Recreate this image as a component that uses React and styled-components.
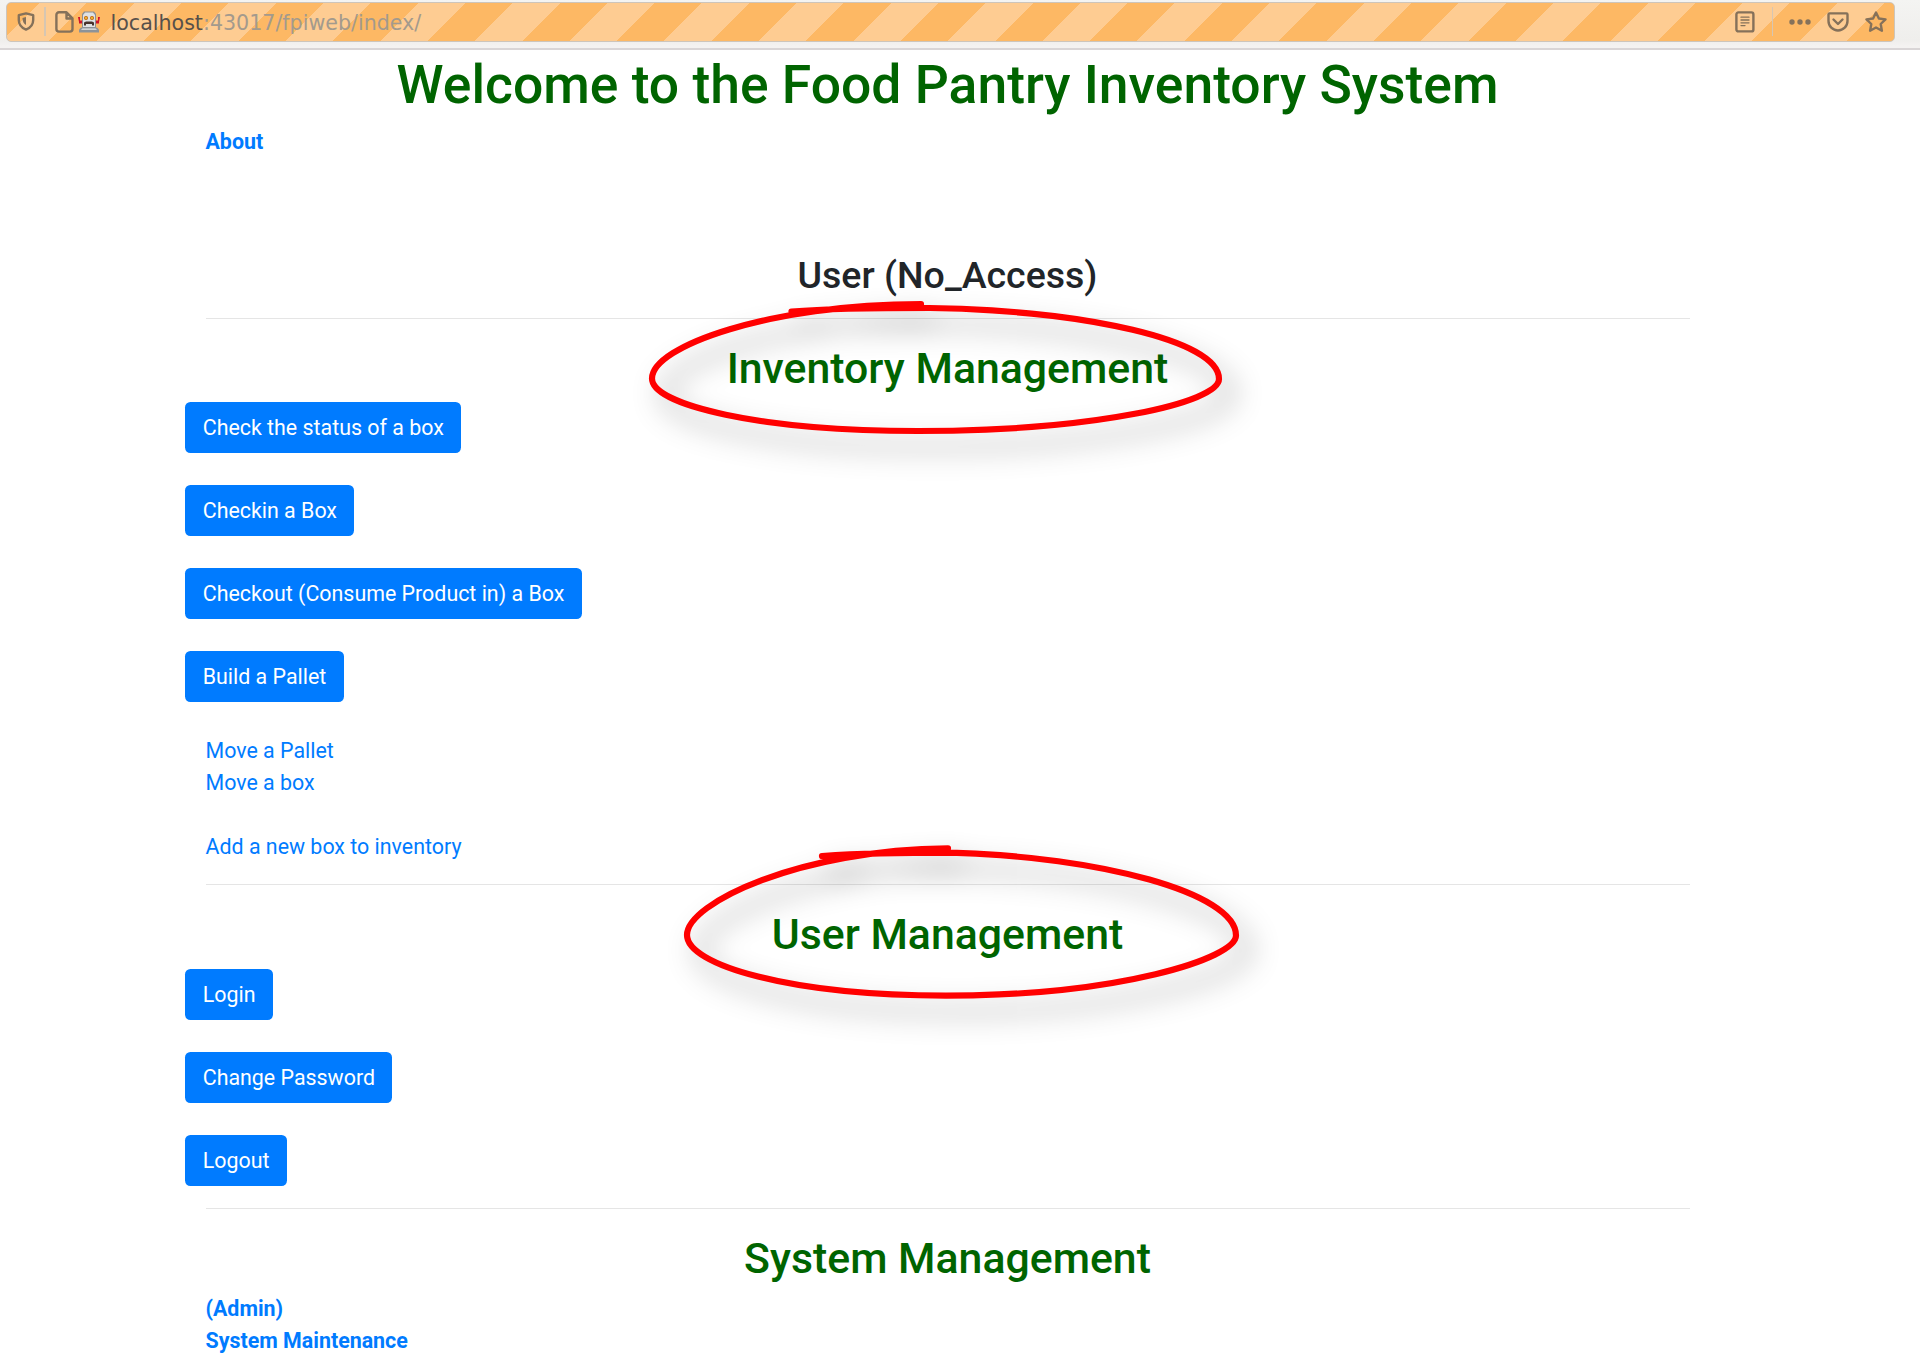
import React from 'react';
import styled, { createGlobalStyle } from 'styled-components';

const Global = createGlobalStyle`
  * { box-sizing: border-box; }
  html, body { margin: 0; background: #fff; }
  body { font-family: Roboto, sans-serif; font-size: 21.4px; line-height: 32.1px; color: #212529; overflow: hidden; }
`;

const Page = styled.div`
  position: relative;
  width: 1920px;
  height: 1359px;
  overflow: hidden;
  background: #fff;
`;

const Toolbar = styled.header`
  height: 50px;
  padding: 2px 25px 0 6px;
  background: linear-gradient(#f4f4f2, #efeeec 40px, #f4f2f1 46px);
  border-bottom: 2px solid #d9d5d6;
`;

const AddressBar = styled.div`
  height: 39.5px;
  display: flex;
  align-items: center;
  border: 1.5px solid #cdc5bb;
  border-radius: 5px;
  background: repeating-linear-gradient(135deg,
    #fdb864 0, #fdb864 23.1px, #fecc92 23.1px, #fecc92 56.55px, #fdb864 56.55px, #fdb864 66.9px);
`;

const Separator = styled.span`
  width: 1.5px;
  height: 29px;
  background: #d6c6b2;
  margin: 0 ${p => p.$right}px 0 ${p => p.$left}px;
`;

const Address = styled.span`
  font: 20.6px/30px 'DejaVu Sans', sans-serif;
  color: #a39a8d;
  margin-left: 10.5px;
  padding-top: 2px;
  flex: 1;
  white-space: nowrap;
  b { font-weight: 400; color: #57504a; }
`;

const Icon = styled.svg`
  display: block;
  flex: none;
  width: ${p => p.$w}px;
  height: ${p => p.$h}px;
  margin-left: ${p => p.$left || 0}px;
  margin-right: ${p => p.$right || 0}px;
  fill: none;
  stroke: #85715a;
  stroke-width: 2.4;
  stroke-linejoin: round;
  stroke-linecap: round;
`;

const Container = styled.main`
  width: 1484px;
  margin: 0 0 0 205.5px;
  padding-top: 3px;
`;

const Title = styled.h1`
  margin: 0;
  font-size: 53.45px;
  line-height: 64.4px;
  font-weight: 500;
  text-align: center;
  color: #006400;
`;

const UserLine = styled.h3`
  margin: 94px 0 0;
  font-size: 37.5px;
  line-height: 45px;
  font-weight: 500;
  text-align: center;
`;

const Section = styled.section`
  border-top: 1.4px solid #e5e5e5;
  margin-top: ${p => p.$top}px;
  padding-top: 24px;
`;

const Heading = styled.h2`
  margin: 0 0 7.5px;
  font-size: 42.8px;
  line-height: 51.5px;
  font-weight: 500;
  text-align: center;
  color: #006400;
`;

const Buttons = styled.div`
  display: flex;
  flex-direction: column;
  align-items: flex-start;
  gap: 31.9px;
  margin: ${p => p.$top || 0}px 0 0 -20.1px;
`;

const Button = styled.a`
  height: 51px;
  padding: 10.1px 17.3px 0;
  border-radius: 5.4px;
  background: #007bff;
  color: #fff;
  white-space: nowrap;
`;

const Links = styled.nav`
  display: flex;
  flex-direction: column;
  align-items: flex-start;
  padding-top: ${p => p.$top || 0}px;
`;

const Link = styled.a`
  color: #007bff;
  font-weight: ${p => (p.$bold ? 700 : 400)};
  margin-top: ${p => (p.$spaced ? 32.1 : 0)}px;
`;

const Markup = styled.svg`
  position: absolute;
  inset: 0;
  pointer-events: none;
  fill: none;
  stroke: #f00;
  stroke-width: 6.2;
  stroke-linecap: round;
  stroke-linejoin: round;
`;

const Loop = styled.path`
  filter: drop-shadow(12px 16px 14px rgba(0, 0, 0, 0.38));
`;

function Robot() {
  return (
    <Icon $w={22} $h={22} $left={4} viewBox="0 0 22 22">
      <g stroke="none">
        <path d="M0 6h2v5H1zM22 6h-2v5h1z" fill="#d0142c" />
        <path d="M1 9.500h3v3H1zM18 9.500h3v3h-3z" fill="#d0142c" />
        <path d="M6 .5h10L18 3V17H4V3z" fill="#8b8f94" />
        <path d="M7 1.500h8L17 4V16H5V4z" fill="#dfe1e4" />
        <circle cx="8" cy="7" r="2" fill="#c2660c" />
        <circle cx="14" cy="7" r="2" fill="#c2660c" />
        <circle cx="8" cy="7" r="0.900" fill="#ffd23c" />
        <circle cx="14" cy="7" r="0.900" fill="#ffd23c" />
        <path d="M6 14.500v-3L8 10.500h6l2 1v3h-2V13H8v1.500z" fill="#46322c" />
        <path d="M3 16.500h16l2 2V21.500H1v-3z" fill="#8d9399" />
        <path d="M4.500 17.500h13l1.500 1.300H3z" fill="#e6e8ea" />
      </g>
    </Icon>
  );
}

export default function App() {
  return (
    <Page>
      <Global />
      <Toolbar>
        <AddressBar>
          <Icon $w={18} $h={19} $left={9.500} viewBox="0 0 18 19">
            <path d="M9 1.400 16.200 3.200V8C16.200 13 13 16 9 17.600 5 16 1.800 13 1.800 8V3.200z" />
            <path d="M9 5v8C6.500 11.500 5.500 9.500 5.500 6z" fill="#85715a" stroke="none" />
          </Icon>
          <Separator $left={9.500} $right={9.500} />
          <Icon $w={19} $h={22} viewBox="0 0 19 22">
            <path d="M4 1.300h7.500l6 6V18a2.600 2.600 0 0 1-2.600 2.600H4A2.600 2.600 0 0 1 1.400 18V4A2.600 2.600 0 0 1 4 1.300zM11.500 1.500v6h6" />
          </Icon>
          <Robot />
          <Address><b>localhost</b>:43017/fpiweb/index/</Address>
          <Icon $w={20} $h={22} viewBox="0 0 20 22">
            <rect x="1.400" y="1.400" width="17" height="19" rx="2" />
            <path d="M6 6.200h8M6 9h8M6 11.800h8M6 14.600h4" strokeWidth="1.300" />
          </Icon>
          <Separator $left={16.500} $right={16} />
          <Icon $w={22} $h={6} viewBox="0 0 22 6">
            <g fill="#85715a" stroke="none"><circle cx="3" cy="3" r="2.700" /><circle cx="11" cy="3" r="2.700" /><circle cx="19" cy="3" r="2.700" /></g>
          </Icon>
          <Icon $w={22} $h={20} $left={16} viewBox="0 0 22 20">
            <path d="M2.500 1.400h17q1 0 1 1V9a9.500 9.500 0 0 1-19 0V2.400q0-1 1-1z" />
            <path d="m6.500 7.500 4.500 4.500 4.500-4.500" />
          </Icon>
          <Icon $w={22} $h={22} $left={15.500} $right={7.500} viewBox="0 0 22 22">
            <path d="m11 1.500 2.900 6 6.600.9-4.800 4.600 1.200 6.700L11 16.500l-5.900 3.200L6.300 13 1.500 8.400l6.600-.9z" />
          </Icon>
        </AddressBar>
      </Toolbar>
      <Container>
        <Title>Welcome to the Food Pantry Inventory System</Title>
        <Links $top={9}><Link $bold>About</Link></Links>
        <UserLine>User (No_Access)</UserLine>
        <Section $top={20.500}>
          <Heading>Inventory Management</Heading>
          <Buttons>
            <Button>Check the status of a box</Button>
            <Button>Checkin a Box</Button>
            <Button>Checkout (Consume Product in) a Box</Button>
            <Button>Build a Pallet</Button>
          </Buttons>
          <Links $top={33}>
            <Link>Move a Pallet</Link>
            <Link>Move a box</Link>
            <Link $spaced>Add a new box to inventory</Link>
          </Links>
        </Section>
        <Section $top={21.300}>
          <Heading>User Management</Heading>
          <Buttons $top={8.400}>
            <Button>Login</Button>
            <Button>Change Password</Button>
            <Button>Logout</Button>
          </Buttons>
        </Section>
        <Section $top={21.700}>
          <Heading>System Management</Heading>
          <Links $top={1.200}>
            <Link $bold>(Admin)</Link>
            <Link $bold>System Maintenance</Link>
          </Links>
        </Section>
      </Container>
      <Markup width="1920" height="1359" viewBox="0 0 1920 1359">
        <Loop d="M791.500 311.500C830 308.500 880 308 930 308C1085 310.500 1219 340 1219 379C1219 402.500 1095 431 918 431C760 431 652 405 652 378.500C652 346 770 304.200 921 304.200" />
        <Loop d="M822 856C865 853.300 905 852.700 950.600 852.700C1100 856.500 1236 893 1236 935.500C1236 958.500 1118 995.600 946 995.600C790 995.600 687 965 687 935C687 903 800 849.500 948 848.300" />
      </Markup>
    </Page>
  );
}
